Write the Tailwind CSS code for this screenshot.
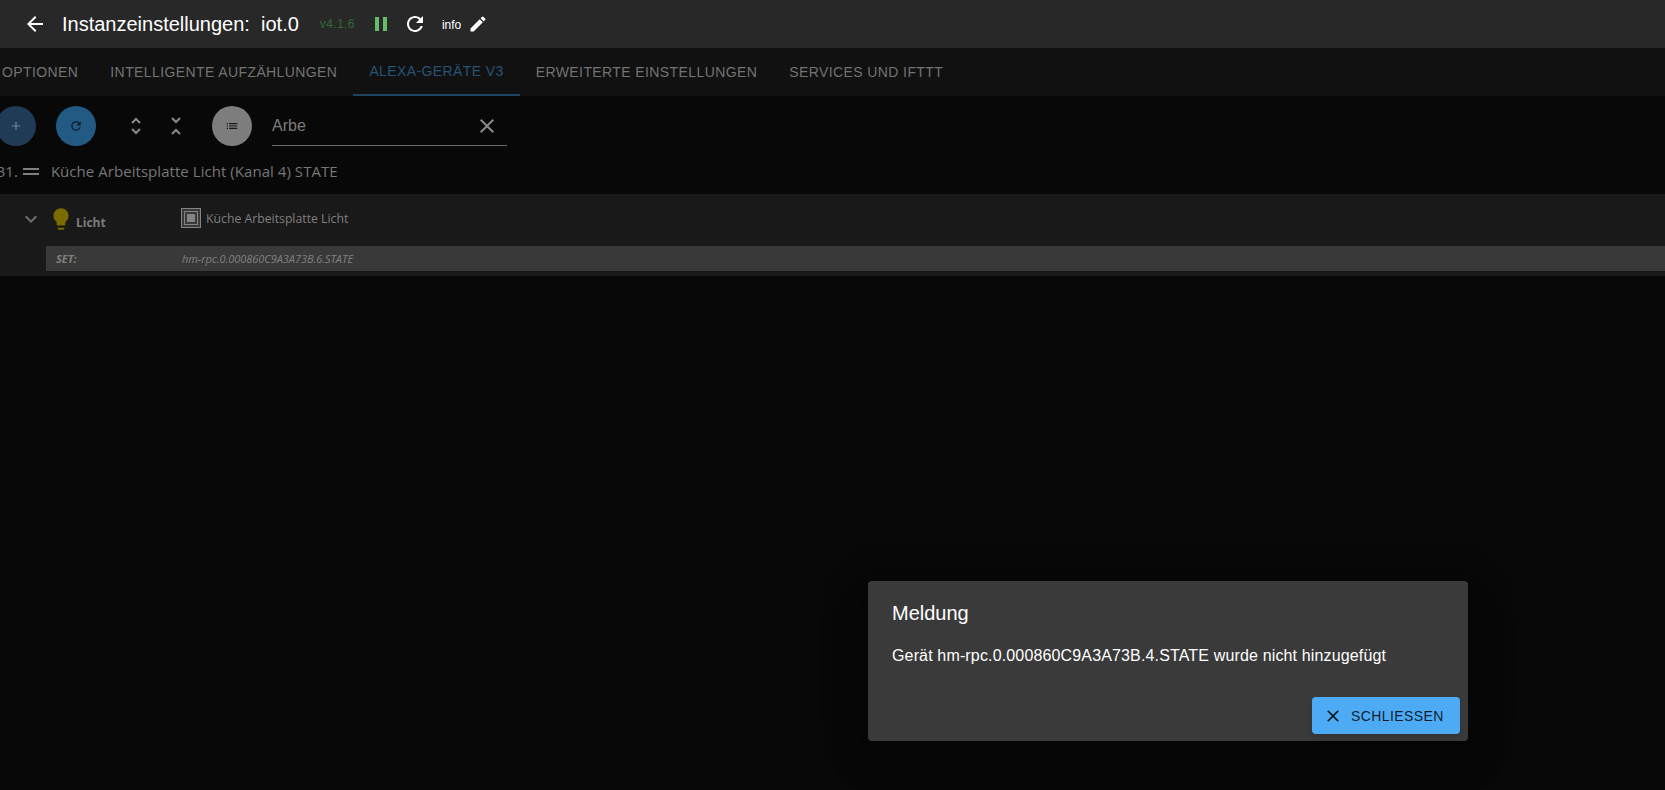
<!doctype html>
<html lang="de">

<head>
  <meta charset="UTF-8" />
  <title>Instanzeinstellungen: iot.0</title>
  <script src="https://cdn.jsdelivr.net/npm/@tailwindcss/browser@4"></script>
</head>

<body class="relative h-[790px] w-[1665px] overflow-hidden bg-[#080808] font-['Liberation_Sans',sans-serif]">

  <!-- Kopfzeile -->
  <header class="flex h-12 items-center bg-[#282828] pl-[23px] text-white">
    <svg class="h-6 w-6" viewBox="0 0 24 24" fill="currentColor"><path d="M20 11H7.83l5.59-5.59L12 4l-8 8 8 8 1.41-1.41L7.83 13H20v-2z" /></svg>
    <h1 class="ml-[15px] text-[20px] leading-6 whitespace-pre">Instanzeinstellungen:&nbsp; iot.0</h1>
    <span class="ml-[21px] text-xs tracking-[0.4px] text-[#2f6b33]">v4.1.6</span>
    <svg class="ml-[14px] h-6 w-6 text-[#66bb6a]" viewBox="0 0 24 24" fill="currentColor"><path d="M6 19h4V5H6v14zm8-14v14h4V5h-4z" /></svg>
    <svg class="ml-[10px] h-6 w-6" viewBox="0 0 24 24" fill="currentColor"><path d="M17.65 6.35C16.2 4.9 14.21 4 12 4c-4.42 0-7.99 3.58-7.99 8s3.57 8 7.99 8c3.73 0 6.84-2.55 7.73-6h-2.08c-.82 2.33-3.04 4-5.65 4-3.31 0-6-2.69-6-6s2.69-6 6-6c1.66 0 3.14.69 4.22 1.78L13 11h7V4l-2.35 2.35z" /></svg>
    <span class="ml-[15px] mt-0.5 text-xs">info</span>
    <svg class="ml-[7px] h-5 w-5" viewBox="0 0 24 24" fill="currentColor"><path d="M3 17.25V21h3.75L17.81 9.94l-3.75-3.75L3 17.25zM20.71 7.04a1 1 0 0 0 0-1.41l-2.34-2.34a1 1 0 0 0-1.41 0l-1.83 1.83 3.75 3.75 1.83-1.83z" /></svg>
  </header>

  <!-- Tabs -->
  <nav class="-ml-[14px] flex h-12 items-stretch bg-[#111111] text-sm tracking-[0.4px] text-[#737373] uppercase">
    <span class="flex items-center px-4">Optionen</span>
    <span class="flex items-center px-4">Intelligente Aufzählungen</span>
    <span class="flex items-center border-b-2 border-[#1f4565] px-4 text-[#265478]">Alexa-Geräte V3</span>
    <span class="flex items-center px-4">Erweiterte Einstellungen</span>
    <span class="flex items-center px-4">Services und IFTTT</span>
  </nav>

  <!-- Werkzeugleiste -->
  <div class="-ml-1 flex h-[50px] items-center pt-[10px] text-[#8a8a8a]">
    <button class="flex h-10 w-10 items-center justify-center rounded-full bg-[#1f3b55] text-[#6e8499]">
      <svg class="h-3.5 w-3.5" viewBox="0 0 24 24" fill="currentColor"><path d="M19 13h-6v6h-2v-6H5v-2h6V5h2v6h6v2z" /></svg>
    </button>
    <button class="ml-5 flex h-10 w-10 items-center justify-center rounded-full bg-[#235a84] text-[#0c1c2a]">
      <svg class="h-3.5 w-3.5" viewBox="0 0 24 24" fill="currentColor"><path d="M17.65 6.35C16.2 4.9 14.21 4 12 4c-4.42 0-7.99 3.58-7.99 8s3.57 8 7.99 8c3.73 0 6.84-2.55 7.73-6h-2.08c-.82 2.33-3.04 4-5.65 4-3.31 0-6-2.69-6-6s2.69-6 6-6c1.66 0 3.14.69 4.22 1.78L13 11h7V4l-2.35 2.35z" /></svg>
    </button>
    <span class="ml-7 flex h-10 w-6 items-center justify-center">
      <svg class="h-6 w-6" viewBox="0 0 24 24" fill="none" stroke="currentColor" stroke-width="2"><path d="M8 9l4-4 4 4M8 15l4 4 4-4" /></svg>
    </span>
    <span class="ml-4 flex h-10 w-6 items-center justify-center">
      <svg class="h-6 w-6" viewBox="0 0 24 24" fill="none" stroke="currentColor" stroke-width="2"><path d="M8 4l4 4 4-4M8 20l4-4 4 4" /></svg>
    </span>
    <button class="ml-6 flex h-10 w-10 items-center justify-center rounded-full bg-[#7d7d7d] text-[#1a1a1a]">
      <svg class="h-3.5 w-3.5" viewBox="0 0 24 24" fill="currentColor"><path d="M3 13h2v-2H3v2zm0 4h2v-2H3v2zm0-8h2V7H3v2zm4 4h14v-2H7v2zm0 4h14v-2H7v2zM7 7v2h14V7H7z" /></svg>
    </button>
    <div class="ml-5 flex h-10 w-[235px] items-center justify-between border-b border-[#6b6b6b] pr-2 text-base">
      <span class="text-[#7c7c7c]">Arbe</span>
      <svg class="h-6 w-6 text-[#8a8a8a]" viewBox="0 0 24 24" fill="currentColor"><path d="M19 6.41 17.59 5 12 10.59 6.41 5 5 6.41 10.59 12 5 17.59 6.41 19 12 13.41 17.59 19 19 17.59 13.41 12z" /></svg>
    </div>
  </div>

  <!-- Gerät -->
  <div class="-ml-3 mt-[15px] flex h-5 items-center font-['Open_Sans',sans-serif] text-[15px] tracking-[0.05px] text-[#777777]">
    <span>131.</span>
    <span class="ml-[5px] flex h-[7px] w-4 flex-col justify-between">
      <i class="block h-0.5 bg-[#808080]"></i>
      <i class="block h-0.5 bg-[#808080]"></i>
    </span>
    <span class="ml-3">Küche Arbeitsplatte Licht (Kanal 4) STATE</span>
  </div>

  <section class="mt-[13px] h-[82px] bg-[#191919] font-['Open_Sans',sans-serif]">
    <div class="flex h-[52px] items-start">
      <svg class="mt-[13px] ml-[19px] h-6 w-6 text-[#6f6f6f]" viewBox="0 0 24 24" fill="currentColor"><path d="M16.59 8.59 12 13.17 7.41 8.59 6 10l6 6 6-6z" /></svg>
      <svg class="mt-[12px] ml-[5px] h-[26px] w-[26px] text-[#7a6a00]" viewBox="0 0 24 24" fill="currentColor"><path d="M9 21c0 .55.45 1 1 1h4c.55 0 1-.45 1-1v-1H9v1zm3-19C8.14 2 5 5.14 5 9c0 2.38 1.19 4.47 3 5.74V17c0 .55.45 1 1 1h6c.55 0 1-.45 1-1v-2.26c1.81-1.27 3-3.36 3-5.74 0-3.86-3.14-7-7-7z" /></svg>
      <span class="mt-[21px] ml-[2px] w-[105px] text-xs font-bold text-[#7c7c7c]">Licht</span>
      <span class="mt-[14px] flex h-5 w-5 items-center justify-center border border-[#848484] bg-[#3a3a3a]">
        <span class="flex h-[14px] w-[14px] items-center justify-center border border-[#848484]">
          <i class="block h-2 w-2 bg-[#848484]"></i>
        </span>
      </span>
      <span class="mt-[15px] ml-[5px] text-[12.25px] leading-5 text-[#7f7f7f]">Küche Arbeitsplatte Licht</span>
    </div>
    <div class="ml-[46px] flex h-[25px] items-center bg-[#393939] pt-0.5 text-[11px] tracking-[-0.05px] text-[#808080] italic">
      <span class="ml-[10px] w-[126px] font-bold">SET:</span>
      <span>hm-rpc.0.000860C9A3A73B.6.STATE</span>
    </div>
  </section>

  <!-- Meldung -->
  <div class="absolute top-[581px] left-[868px] flex h-[160px] w-[600px] flex-col rounded bg-[#3a3a3a] text-white shadow-[0_11px_15px_-7px_rgba(0,0,0,0.2),0_24px_38px_3px_rgba(0,0,0,0.14),0_9px_46px_8px_rgba(0,0,0,0.12)]">
    <h2 class="px-6 pt-4 text-xl leading-8">Meldung</h2>
    <p class="mt-[15px] px-6 text-base leading-6 tracking-[0.15px]">Gerät hm-rpc.0.000860C9A3A73B.4.STATE wurde nicht hinzugefügt</p>
    <button class="mt-auto mr-2 mb-[7px] flex h-[37px] w-[148px] items-center self-end rounded bg-[#4dabf5] pl-[11px] text-sm tracking-[0.4px] text-black/85 shadow-md">
      <svg class="mr-2 h-5 w-5" viewBox="0 0 24 24" fill="currentColor"><path d="M19 6.41 17.59 5 12 10.59 6.41 5 5 6.41 10.59 12 5 17.59 6.41 19 12 13.41 17.59 19 19 17.59 13.41 12z" /></svg>
      SCHLIESSEN
    </button>
  </div>

</body>

</html>
